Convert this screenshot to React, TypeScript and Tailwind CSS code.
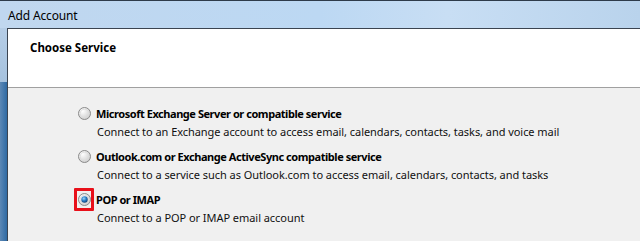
import React from "react";

function Radio({ checked }: { checked?: boolean }) {
  return (
    <svg width="13" height="13" viewBox="0 0 13 13" className="block">
      <defs>
        <radialGradient id={checked ? "rg1" : "rg0"} cx="0.35" cy="0.3" r="0.8">
          <stop offset="0" stopColor="#ffffff" />
          <stop offset="1" stopColor="#c9c9c9" />
        </radialGradient>
        <radialGradient id="dot" cx="0.4" cy="0.35" r="0.7">
          <stop offset="0" stopColor="#9fd8f8" />
          <stop offset="0.5" stopColor="#2a7fc8" />
          <stop offset="1" stopColor="#0d3e74" />
        </radialGradient>
      </defs>
      <circle cx="6.5" cy="6.5" r="6" fill={`url(#${checked ? "rg1" : "rg0"})`} stroke="#8a8a8a" strokeWidth="1" />
      <circle cx="6.5" cy="6.5" r="4.3" fill="none" stroke="#dcdcdc" strokeWidth="0.8" />
      {checked && <circle cx="6.5" cy="6.5" r="3.2" fill="url(#dot)" />}
    </svg>
  );
}

function Option({ title, desc, checked }: { title: string; desc: string; checked?: boolean }) {
  return (
    <div className="flex flex-col">
      <div className="flex items-center h-[17px]">
        <div className="relative w-[18px] flex items-center">
          {checked && (
            <div className="absolute left-[-4px] top-[-5px] w-[20px] h-[23px] border-[3px] border-[#e8101a] rounded-[1px]" />
          )}
          <Radio checked={checked} />
        </div>
        <span className="font-bold text-black tracking-[-0.45px]">{title}</span>
      </div>
      <div className="pl-[19px] mt-[1px] h-[17px] text-[#111] tracking-[-0.05px]">{desc}</div>
    </div>
  );
}

export default function App() {
  return (
    <div
      className="w-[640px] h-[241px] overflow-hidden relative bg-[#f0f0f0] text-[11px] leading-[17px]"
      style={{ fontFamily: '"Noto Sans", sans-serif' }}
    >
      <div className="flex flex-col h-full">
        {/* title bar */}
        <div className="h-[28px] flex items-center pl-[8px] bg-[linear-gradient(90deg,#c0d7ef_0%,#bcd8f3_50%,#c8def4_70%,#b9d3ec_100%)] border-t border-[#2e3b4a]">
          <span className="text-black text-[12px] tracking-[-0.15px] mt-[1px]">Add Account</span>
        </div>
        <div className="flex flex-1">
          {/* left frame */}
          <div className="w-[7px] flex flex-col">
            <div className="h-[54px] bg-[linear-gradient(180deg,#b5cde6,#a6c2de)]" />
            <div className="flex-1 bg-[linear-gradient(90deg,#5c88b5,#2f6aa3)]" />
          </div>
          <div className="w-[1px] bg-[#3b4450]" />
          <div className="flex-1 flex flex-col border-t border-[#3b4450]">
            <div className="h-[59px] bg-white border-b border-[#a0a0a0] pl-[22px] pt-[10px]">
              <span className="font-bold text-black text-[11.5px]">Choose Service</span>
            </div>
            <div className="flex-1 bg-[#f0f0f0] pl-[70px] pt-[17px] flex flex-col gap-[8px]">
              <Option
                title="Microsoft Exchange Server or compatible service"
                desc="Connect to an Exchange account to access email, calendars, contacts, tasks, and voice mail"
              />
              <Option
                title="Outlook.com or Exchange ActiveSync compatible service"
                desc="Connect to a service such as Outlook.com to access email, calendars, contacts, and tasks"
              />
              <Option title="POP or IMAP" desc="Connect to a POP or IMAP email account" checked />
            </div>
          </div>
        </div>
      </div>
    </div>
  );
}
